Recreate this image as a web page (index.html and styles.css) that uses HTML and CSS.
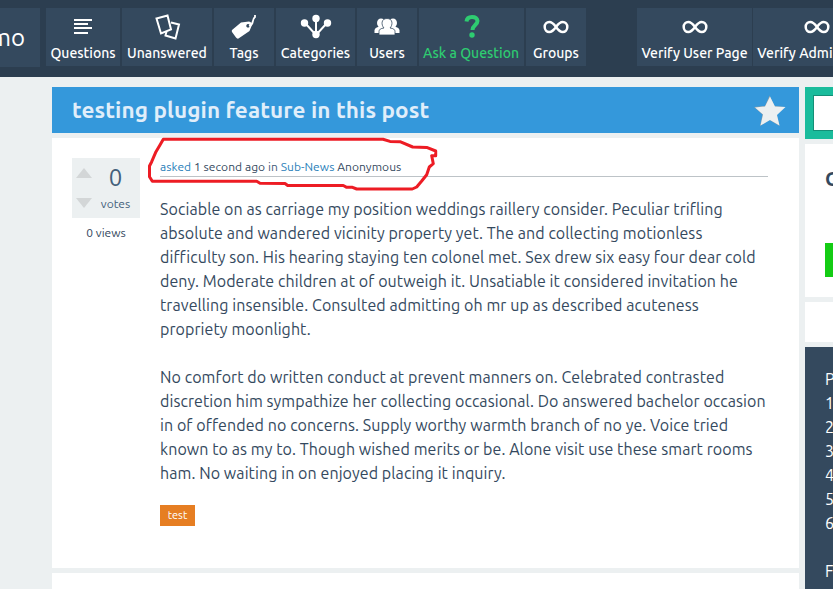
FILE: index.html
```html
<!DOCTYPE html>
<html lang="en">
<head>
<meta charset="utf-8">
<title>testing plugin feature in this post</title>
<link rel="stylesheet" href="styles.css">
</head>
<body>
<svg class="defs" width="0" height="0" aria-hidden="true">
  <symbol id="infinity" viewBox="0 0 26 14"><path d="M13 7C10.500 3.500 9 2 6.300 2a4.600 5 0 0 0 0 10C9 12 10.500 10.500 13 7s4-5 6.700-5a4.600 5 0 0 1 0 10C17 12 15.500 10.500 13 7z" fill="none" stroke="#fff" stroke-width="2.500"/></symbol>
</svg>
<header class="topbar">
  <div class="logo">mo</div>
  <nav class="nav">
    <a class="item questions"><svg width="26" height="30" viewBox="0 0 26 30"><path d="M4 10h18M4 14h14M4 18h18M4 23h14" stroke="#fff" stroke-width="2"/></svg><span>Questions</span></a>
    <a class="item unanswered"><svg width="28" height="30" viewBox="0 0 28 30"><g fill="none" stroke="#fff" stroke-width="2"><path d="M3.500 8.500l11-3 3.500 14-10 4z"/><path d="M18 12.500l8 2-3.500 14-10-3 1-4"/></g></svg><span>Unanswered</span></a>
    <a class="item tags"><svg width="28" height="30" viewBox="0 0 28 30"><path fill="#fff" fill-rule="evenodd" d="M2 20L11 12.500 19 11.500Q22 12 22 15L19.500 21 8.500 28.500Q7 29 6 27.500L2 22Q1.500 21 2 20zM18 14a1.800 1.800 0 1 0 .1 0z"/><path d="M19 16c6-2 2-6 6-9V5" fill="none" stroke="#fff" stroke-width="1.800"/></svg><span>Tags</span></a>
    <a class="item categories"><svg width="32" height="30" viewBox="0 0 32 30"><path d="M5 13l11 12 11-12M16 9v16" fill="none" stroke="#fff" stroke-width="2"/><g fill="#fff"><circle cx="4.500" cy="13" r="3.700"/><circle cx="16" cy="8.500" r="3.700"/><circle cx="27.500" cy="13" r="3.700"/><circle cx="16" cy="24.500" r="3.700"/></g></svg><span>Categories</span></a>
    <a class="item users"><svg width="28" height="30" viewBox="0 0 28 30"><g fill="#fff"><ellipse cx="8" cy="13" rx="4" ry="4.500"/><ellipse cx="20" cy="13" rx="4" ry="4.500"/><path d="M1.500 23v-2.500q0-3 5-4h15q5 1 5 4V23z"/></g><path fill="#fff" stroke="#34495e" stroke-width=".8" d="M6 25v-3.500q0-3 5-3.500c-3-3-3-9.500 3-9.500s6 6.500 3 9.500q5 .5 5 3.500V25z"/></svg><span>Users</span></a>
    <a class="item ask"><svg width="24" height="30" viewBox="0 0 24 30"><path d="M6.500 11.500q.5-4.500 5.500-4.500t5.500 4c0 4-5 4-5 9" fill="none" stroke="#2ecc71" stroke-width="4"/><circle cx="12" cy="25" r="2.700" fill="#2ecc71"/></svg><span>Ask a Question</span></a>
    <a class="item groups"><svg class="inf" width="26" height="14"><use href="#infinity"/></svg><span>Groups</span></a>
    <a class="item verify"><svg class="inf" width="26" height="14"><use href="#infinity"/></svg><span>Verify User Page</span></a>
    <a class="item admin"><svg class="inf" width="26" height="14"><use href="#infinity"/></svg><span>Verify Admin Page</span></a>
  </nav>
</header>
<div class="layout">
  <main class="main">
    <div class="title"><h1>testing plugin feature in this post</h1>
      <svg width="34" height="34" viewBox="0 0 34 34"><path d="M16.500 1.500l5 10.500 10.500 1-8.500 7.500 3 11.500-10-6-9.500 6 2.500-11.500L1 13l11-1z" fill="#8d9da6"/><path d="M17 2.500l5 10 10.500.5-8.500 8 2.500 10.500-9.500-5.500-9.500 5.500 2.500-11-8-7 10-1z" fill="#ecf0f1"/></svg>
    </div>
    <article class="post">
      <aside class="stats">
        <div class="vote">
          <div class="arrows"><i class="up"></i><i class="down"></i></div>
          <div class="count"><b>0</b><span>votes</span></div>
        </div>
        <div class="views">0 views</div>
      </aside>
      <section class="content">
        <div class="meta"><a>asked</a> 1 second ago <em>in</em> <a>Sub-News</a> Anonymous</div>
        <div class="text">
          <p>Sociable on as carriage my position weddings raillery consider. Peculiar trifling<br>
          absolute and wandered vicinity property yet. The and collecting motionless<br>
          difficulty son. His hearing staying ten colonel met. Sex drew six easy four dear cold<br>
          deny. Moderate children at of outweigh it. Unsatiable it considered invitation he<br>
          travelling insensible. Consulted admitting oh mr up as described acuteness<br>
          propriety moonlight.</p>
          <p>No comfort do written conduct at prevent manners on. Celebrated contrasted<br>
          discretion him sympathize her collecting occasional. Do answered bachelor occasion<br>
          in of offended no concerns. Supply worthy warmth branch of no ye. Voice tried<br>
          known to as my to. Though wished merits or be. Alone visit use these smart rooms<br>
          ham. No waiting in on enjoyed placing it inquiry.</p>
        </div>
        <a class="tag">test</a>
      </section>
      <svg class="mark" width="300" height="60" viewBox="142 134 300 60"><path d="M383 139.300H163.300L160 145l-4 6.700-4.300 10-2.200 4.300v10.700l2.800 4.600H256.700l3.300 2 25 .2 2.700 2h55.600l3.400 1.800h5.800l4.200 1.700h55.600l4.400-2 5-6 5-6.300 2.600-7.700 4-3.300-1.600-8 4 0v-4.700l-9-3.600-14-.4-12.700-5.300-10-.300z"/></svg>
    </article>
    <div class="next"></div>
  </main>
  <aside class="side">
    <div class="search"><div class="field"></div></div>
    <div class="box promo"><h2>C</h2><div class="green"></div></div>
    <div class="box empty"></div>
    <div class="box dark"><div>P</div><div>1</div><div>2</div><div>3</div><div>4</div><div>5</div><div>6</div><div class="gap">F</div></div>
  </aside>
</div>
</body>
</html>
```
FILE: styles.css
```css
* { box-sizing: border-box; }
body { margin: 0; width: 833px; height: 589px; overflow: hidden; background: #ecf0f1; color: #34495e; font-family: Ubuntu, "Noto Sans", sans-serif; }
.defs { display: block; }
.topbar { height: 77px; background: #2c3e50; padding-top: 8px; display: flex; overflow: hidden; }
.logo { flex: none; width: 40px; height: 59px; background: #34495e; color: #fff; font-size: 24px; line-height: 60px; margin-right: 6px; padding-right: 15px; display: flex; justify-content: flex-end; }
.nav { display: flex; gap: 2px; }
.item { flex: none; height: 58px; background: #34495e; color: #fff; display: flex; flex-direction: column; align-items: center; font-size: 14px; font-weight: 500; line-height: 20px; white-space: nowrap; }
.item svg { flex: none; display: block; margin: 2px 0 3px; }
.item .inf { margin: 12px 0 9px; }
.questions { width: 74px; }
.unanswered { width: 90px; }
.tags { width: 60px; }
.categories { width: 79px; }
.users { width: 60px; }
.ask { width: 105px; color: #2ecc71; }
.ask span { margin-left: -1px; }
.groups { width: 60px; }
.verify { width: 115px; margin-left: 49px; }
.admin { width: 127px; margin-left: -1px; }
.layout { display: flex; gap: 6px; padding: 10px 0 0 52px; }
.main { flex: none; width: 747px; }
.title { height: 46px; background: #3498db; display: flex; justify-content: space-between; padding: 0 12px 0 20px; }
.title svg { margin-top: 7px; }
h1 { margin: 0; color: #e0eefa; font-size: 22.500px; line-height: 46px; letter-spacing: .1px; white-space: nowrap; }
.post { position: relative; height: 430px; margin-top: 5px; background: #fff; display: flex; padding: 20px 31px 0 20px; }
.stats { width: 68px; margin-right: 20px; }
.vote { width: 68px; height: 60px; background: #ecf0f1; display: flex; }
.arrows { width: 24px; padding: 10px 0 0 4px; }
.arrows i { display: block; width: 0; border: 8px solid transparent; }
.arrows .up { border-top: 0; border-bottom: 10px solid #d3d6d7; }
.arrows .down { margin-top: 20px; border-bottom: 0; border-top: 10px solid #d3d6d7; }
.count { width: 39px; text-align: center; color: #44607b; }
.count b { display: block; font-size: 24px; font-weight: 400; line-height: 39px; }
.count span { display: block; font-size: 12px; line-height: 14px; }
.views { font-size: 12px; line-height: 30px; text-align: center; }
.content { flex: none; width: 608px; }
.meta { height: 19px; border-bottom: 1px solid #bdc3c7; font-size: 12px; line-height: 18px; letter-spacing: .05px; white-space: nowrap; }
.meta a { color: #2980b9; }
.meta em { font-style: normal; color: #44607b; }
.text { margin-top: 20px; font-size: 16px; line-height: 24px; letter-spacing: .08px; white-space: nowrap; }
.text p { margin: 0 0 24px; }
.tag { display: block; width: 35px; height: 21px; margin-top: -4px; background: #e67e22; color: #fff; font-size: 11px; line-height: 20px; text-align: center; }
.mark { position: absolute; left: 90px; top: -4px; }
.mark path { fill: none; stroke: #ed1c24; stroke-width: 3; stroke-linejoin: round; }
.next { height: 40px; margin-top: 5px; background: #fff; }
.side { flex: none; width: 200px; }
.search { height: 52px; background: #1abc9c; padding: 8px; }
.field { height: 36px; border: 1px solid #148f77; background: #fff; }
.box { margin-top: 5px; background: #fff; padding-left: 20px; }
.promo { height: 153px; padding-top: 20px; }
h2 { margin: 0; font-size: 20px; line-height: 30px; }
.green { margin-top: 49px; height: 34px; background: #14cc14; }
.empty { height: 40px; }
.dark { height: 260px; background: #34495e; color: #fff; padding-top: 20px; font-size: 16px; line-height: 24px; }
.gap { margin-top: 24px; }
```
